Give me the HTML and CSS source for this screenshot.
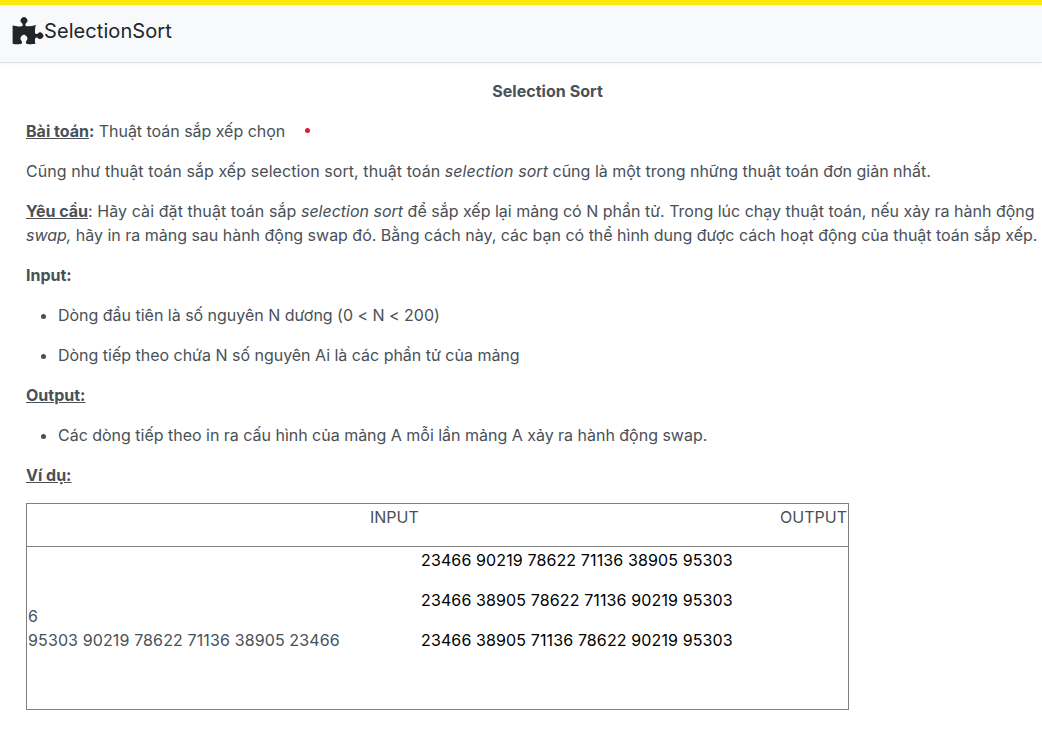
FILE: index.html
```html
<!DOCTYPE html>
<html lang="vi">
<head>
<meta charset="utf-8">
<title>SelectionSort</title>
<link rel="stylesheet" href="styles.css">
</head>
<body>
<header class="bar">
<svg class="logo" viewBox="0 0 32 28"><path d="M.6 8.600Q5 9.800 9.600 9.200C11.200 8.800 11 7.400 9.900 6.100A3.300 3.300 0 1 1 14.100 6.100C13 7.400 13 8.900 14.600 9.200Q19 9.600 23.800 8Q22.800 12 23 15.200C23.400 17.400 24.500 17.300 25.800 16.500A3.200 3.200 0 1 1 25.800 20.900C24.500 20.100 23.400 20.400 23 22.200Q22.900 24.500 23.400 26.800Q19.500 27.600 15.400 27C13.700 26.600 13.500 25.300 14.300 24A3.300 3.600 0 1 0 9.600 24C10.400 25.300 10.200 26.500 8.600 27Q4.500 27.600.6 26.700Z"/></svg>
<span class="name">SelectionSort</span>
</header>
<main class="content">
<p class="title"><strong>Selection Sort</strong></p>
<p><strong><u>Bài toán</u>:</strong><span class="task"> Thuật toán sắp xếp chọn</span><span class="dot"></span></p>
<p><span class="loose">Cũng như thuật toán sắp xếp selection sort, thuật toán <em>selection sort</em></span> cũng là một trong những thuật toán đơn giản nhất.</p>
<p><strong><u>Yêu cầu</u></strong><span class="loose">: Hãy cài đặt thuật toán sắp</span> <em>selection sort</em> để sắp xếp lại mảng có N phần tử. Trong lúc chạy thuật toán, nếu xảy ra hành động<br><span class="tight"><em>swap,</em> hãy in ra mảng sau hành động swap đó. Bằng cách này, các bạn có thể hình dung được cách hoạt động của thuật toán sắp xếp.</span></p>
<p><strong>Input:</strong></p>
<ul class="tight">
<li>Dòng đầu tiên là số nguyên N dương (0 &lt; N &lt; 200)</li>
<li>Dòng tiếp theo chứa N số nguyên Ai là các phần tử của mảng</li>
</ul>
<p><strong><u>Output:</u></strong></p>
<ul class="tight"><li>Các dòng tiếp theo in ra cấu hình của mảng A mỗi lần mảng A xảy ra hành động swap.</li></ul>
<p><strong><u>Ví dụ:</u></strong></p>
<div class="table">
<div class="head"><span>INPUT</span><span>OUTPUT</span></div>
<div class="row">
<div class="in">6<br>95303 90219 78622 71136 38905 23466</div>
<div class="out"><p>23466 90219 78622 71136 38905 95303</p><p>23466 38905 78622 71136 90219 95303</p><p>23466 38905 71136 78622 90219 95303</p></div>
</div>
</div>
</main>
</body>
</html>
```
FILE: styles.css
```css
* { box-sizing: border-box; }
body { margin: 0; background: #fff; color: #495057; font: 16px/24px Inter, sans-serif; overflow: hidden; }
.bar { height: 63px; border-top: 5px solid #fce80a; border-bottom: 1px solid #dee2e6; background: #f8f9fb; box-shadow: 0 1px 2px rgba(0, 0, 0, .05); display: flex; align-items: flex-start; padding: 12px 12px 0; }
.logo { width: 32px; height: 28px; fill: #212529; }
.name { font-size: 20px; line-height: 28px; letter-spacing: .08px; color: #212529; }
.content { padding: 16px 0 0 26px; width: 1069px; }
p { margin: 0 0 16px; white-space: nowrap; }
.title { text-align: center; letter-spacing: .04px; }
strong { font-weight: 700; }
.task { letter-spacing: -.03px; }
.loose { letter-spacing: .075px; }
.tight { letter-spacing: -.016px; }
.dot { display: inline-block; width: 5px; height: 5px; border-radius: 50%; background: #e01b24; margin-left: 20px; vertical-align: 4px; }
ul { margin: 0; padding-left: 32px; }
li { margin-bottom: 16px; }
.table { width: 823px; border: 1px solid #808080; }
.head { height: 43px; display: flex; justify-content: space-between; border-bottom: 1px solid #808080; padding: 1px 1px 0 343px; }
.row { height: 162px; display: grid; grid-template-columns: 393px 1fr; letter-spacing: .12px; }
.in { align-self: center; padding-left: 1px; }
.out { padding: 1px 0 0 1px; color: #000; }
```
